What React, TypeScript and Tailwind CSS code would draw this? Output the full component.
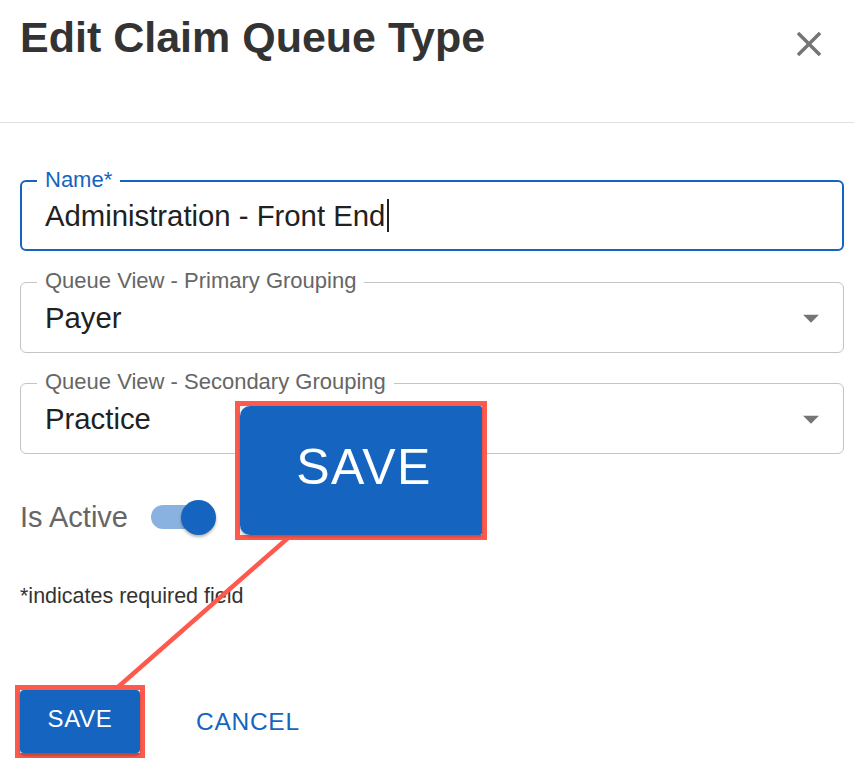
import type { ReactNode } from "react";

function CloseIcon() {
  return (
    <svg viewBox="0 0 24 24" className="h-[42px] w-[42px] fill-[#757575]">
      <path d="M19 6.41 17.59 5 12 10.59 6.41 5 5 6.41 10.59 12 5 17.59 6.41 19 12 13.41 17.59 19 19 17.59 13.41 12z" />
    </svg>
  );
}

function ArrowDropDown() {
  return (
    <svg viewBox="0 0 24 24" className="mr-[13px] h-[38px] w-[38px] fill-[#757575]">
      <path d="M7 10l5 5 5-5z" />
    </svg>
  );
}

type FieldProps = {
  label: string;
  focused?: boolean;
  select?: boolean;
  children: ReactNode;
};

function Field({ label, focused, select, children }: FieldProps) {
  return (
    <div
      className={`relative flex h-[71px] items-center justify-between rounded-[6px] ${
        focused ? "border-2 border-[#1565c0] pl-[23px]" : "border border-[#c4c4c4] pl-6"
      }`}
    >
      <span
        className={`absolute top-[-13px] bg-white px-2 text-[22px] leading-[22px] ${
          focused ? "left-[15px] text-[#1565c0]" : "left-[16px] text-[#666]"
        }`}
      >
        {label}
      </span>
      <div className="flex items-center text-[29.3px] leading-[34px] text-[#212121]">{children}</div>
      {select && <ArrowDropDown />}
    </div>
  );
}

function Switch() {
  return (
    <div className="relative h-[35px] w-[65px]">
      <div className="mt-[5.5px] h-[24px] w-[59px] rounded-full bg-[#8ab2e0]" />
      <div className="absolute right-0 top-0 h-[35px] w-[35px] rounded-full bg-[#1565c0] shadow-[0_2px_3px_rgba(0,0,0,0.3)]" />
    </div>
  );
}

export default function App() {
  return (
    <div className="relative h-[762px] w-[854px] overflow-hidden bg-white font-['Liberation_Sans',Arial,sans-serif]">
      <div className="flex h-[123px] items-start justify-between border-b border-[#e0e0e0] pl-5 pr-6 pt-3">
        <h1 className="text-[43px] font-bold leading-[50px] text-[#333]">Edit Claim Queue Type</h1>
        <div className="mt-[11px]">
          <CloseIcon />
        </div>
      </div>

      <div className="pl-5 pr-[10px] pt-[57px]">
        <Field label="Name*" focused>
          <span>Administration - Front End</span>
          <span className="ml-[2px] inline-block h-[33px] w-[2px] bg-[#222]" />
        </Field>
        <div className="mt-[31px]">
          <Field label="Queue View - Primary Grouping" select>
            Payer
          </Field>
        </div>
        <div className="mt-[30px]">
          <Field label="Queue View - Secondary Grouping" select>
            Practice
          </Field>
        </div>

        <div className="mt-[43px] flex h-[40px] items-center gap-[23px]">
          <span className="text-[29px] leading-[40px] text-[#666]">Is Active</span>
          <Switch />
        </div>

        <p className="mt-[47px] text-[21.5px] leading-[24px] text-[#333]">*indicates required field</p>

        <div className="-ml-[5px] mt-[77px] flex items-center">
          <div className="border-[5px] border-[#fd5a4d]">
            <button className="flex h-[63px] w-[120px] items-center justify-center rounded-[4px] bg-[#1565c0] pb-[5px] text-[24px] leading-[24px] tracking-[0.03em] text-white shadow-[0_3px_3px_rgba(0,0,0,0.25)]">
              SAVE
            </button>
          </div>
          <button className="ml-[51px] flex h-[63px] items-center text-[24.5px] leading-[24px] tracking-[0.03em] text-[#1565c0]">
            CANCEL
          </button>
        </div>
      </div>

      {/* annotation: zoomed callout of the save button */}
      <svg className="pointer-events-none absolute left-0 top-0 h-[762px] w-[854px]">
        <line x1="288" y1="538" x2="118" y2="687" stroke="#fd5a4d" strokeWidth="4.5" />
      </svg>
      <div className="absolute left-[235px] top-[401px] h-[139px] w-[252px] border-[5px] border-[#fd5a4d] bg-[#f4f4f4]">
        <div className="flex h-full w-full items-center justify-center rounded-l-[10px] rounded-r-[2px] bg-[#1565c0] pb-[8px] pl-[6px] shadow-[0_2px_3px_rgba(0,0,0,0.2)]">
          <span className="text-[50px] leading-[50px] tracking-[0.03em] text-white blur-[0.5px]">SAVE</span>
        </div>
      </div>
    </div>
  );
}
